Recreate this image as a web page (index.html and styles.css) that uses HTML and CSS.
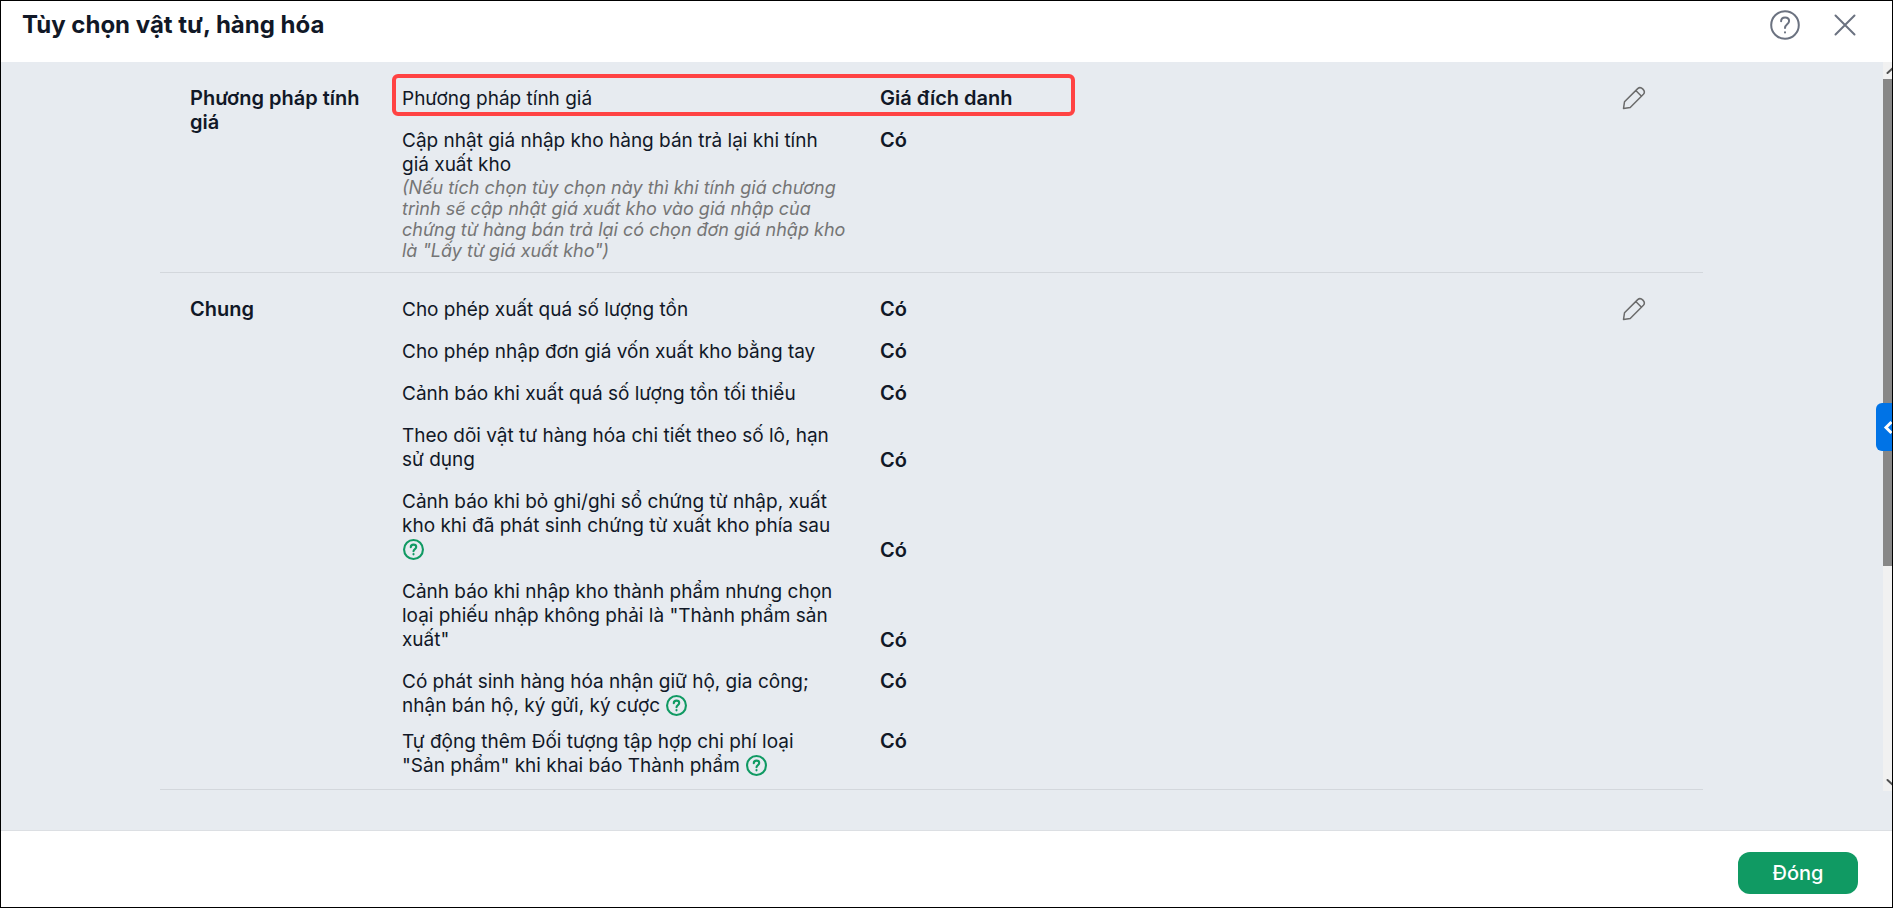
FILE: index.html
```
<!DOCTYPE html>
<html lang="vi">
<head>
    <meta charset="UTF-8">
    <meta name="viewport" content="width=device-width, initial-scale=1.0">
    <title>Tùy chọn vật tư, hàng hóa</title>
    <link rel="stylesheet" href="styles.css">
</head>
<body>
    <svg class="icon-defs" aria-hidden="true">
        <symbol id="icon-pencil" viewBox="0 0 24 24">
            <path d="M1.5 22.5 2.5 15.8 15.7 2.6Q18.2 .4 20.9 3.1 23.6 5.8 21.4 8.3L8.2 21.5Z M13.8 4.5 19.5 10.2"/>
        </symbol>
        <symbol id="icon-help" viewBox="0 0 20 20">
            <circle cx="10" cy="10" r="9"/>
            <path d="M7.4 7.9C7.4 6.3 8.5 5.4 10 5.4s2.6.9 2.6 2.3c0 1.9-2.6 1.9-2.6 4"/>
            <path d="M10 14.3v.3"/>
        </symbol>
    </svg>

    <div class="dialog">
        <header class="dialog-header">
            <h1>Tùy chọn vật tư, hàng hóa</h1>
            <div class="header-actions">
                <button class="icon-btn" type="button" aria-label="Trợ giúp">
                    <svg class="icon-help-lg" viewBox="0 0 30 30">
                        <circle cx="15" cy="15" r="13.8"/>
                        <path d="M11.1 11.2C11.1 8.8 12.7 7.4 15.1 7.4s4 1.4 4 3.6c0 3.1-4.1 3.4-4.1 6.9"/>
                        <path d="M15 22.3v.3"/>
                    </svg>
                </button>
                <button class="icon-btn" type="button" aria-label="Đóng cửa sổ">
                    <svg class="icon-close" viewBox="0 0 30 30">
                        <path d="M5.5 5.5 24.5 24.5M24.5 5.5 5.5 24.5"/>
                    </svg>
                </button>
            </div>
        </header>

        <main class="dialog-body">
            <div class="options">
                <section class="option-group">
                    <h2>Phương pháp tính giá</h2>
                    <dl>
                        <div class="option-row highlight">
                            <dt>Phương pháp tính giá</dt>
                            <dd>Giá đích danh</dd>
                        </div>
                        <div class="option-row">
                            <dt>
                                Cập nhật giá nhập kho hàng bán trả lại khi tính giá xuất kho
                                <p class="note">(Nếu tích chọn tùy chọn này thì khi tính giá chương trình sẽ cập nhật giá xuất kho vào giá nhập của chứng từ hàng bán trả lại có chọn đơn giá nhập kho là "Lấy từ giá xuất kho")</p>
                            </dt>
                            <dd>Có</dd>
                        </div>
                    </dl>
                    <button class="edit-btn" type="button" aria-label="Sửa"><svg><use href="#icon-pencil"/></svg></button>
                </section>

                <section class="option-group">
                    <h2>Chung</h2>
                    <dl>
                        <div class="option-row">
                            <dt>Cho phép xuất quá số lượng tồn</dt>
                            <dd>Có</dd>
                        </div>
                        <div class="option-row">
                            <dt>Cho phép nhập đơn giá vốn xuất kho bằng tay</dt>
                            <dd>Có</dd>
                        </div>
                        <div class="option-row">
                            <dt>Cảnh báo khi xuất quá số lượng tồn tối thiểu</dt>
                            <dd>Có</dd>
                        </div>
                        <div class="option-row bottom">
                            <dt>Theo dõi vật tư hàng hóa chi tiết theo số lô, hạn sử dụng</dt>
                            <dd>Có</dd>
                        </div>
                        <div class="option-row bottom">
                            <dt>
                                Cảnh báo khi bỏ ghi/ghi sổ chứng từ nhập, xuất kho khi đã phát sinh chứng từ xuất kho phía sau
                                <button class="help-btn" type="button" aria-label="Giải thích"><svg><use href="#icon-help"/></svg></button>
                            </dt>
                            <dd>Có</dd>
                        </div>
                        <div class="option-row bottom">
                            <dt>Cảnh báo khi nhập kho thành phẩm nhưng chọn loại phiếu nhập không phải là "Thành phẩm sản xuất"</dt>
                            <dd>Có</dd>
                        </div>
                        <div class="option-row compact">
                            <dt>
                                Có phát sinh hàng hóa nhận giữ hộ, gia công; nhận bán hộ, ký gửi, ký cược
                                <button class="help-btn" type="button" aria-label="Giải thích"><svg><use href="#icon-help"/></svg></button>
                            </dt>
                            <dd>Có</dd>
                        </div>
                        <div class="option-row">
                            <dt>
                                Tự động thêm Đối tượng tập hợp chi phí loại "Sản phẩm" khi khai báo Thành phẩm
                                <button class="help-btn" type="button" aria-label="Giải thích"><svg><use href="#icon-help"/></svg></button>
                            </dt>
                            <dd>Có</dd>
                        </div>
                    </dl>
                    <button class="edit-btn" type="button" aria-label="Sửa"><svg><use href="#icon-pencil"/></svg></button>
                </section>
            </div>

            <div class="scrollbar" aria-hidden="true">
                <svg class="scroll-arrow" viewBox="0 0 9 17"><path d="M4.5 11 11 5"/></svg>
                <div class="scroll-track"><div class="scroll-thumb"></div></div>
                <svg class="scroll-arrow" viewBox="0 0 9 17"><path d="M4.5 6 11 12"/></svg>
            </div>

            <button class="side-tab" type="button" aria-label="Mở rộng">
                <svg viewBox="0 0 16 48"><path d="M15.5 19 10 24.5 15.5 30"/></svg>
            </button>
        </main>

        <footer class="dialog-footer">
            <button class="close-btn" type="button">Đóng</button>
        </footer>
    </div>
</body>
</html>
```
FILE: styles.css
```
*, *::before {
    box-sizing: border-box;
}

body {
    margin: 0;
    font-family: Inter, "Noto Sans", sans-serif;
    font-size: 20px;
    line-height: 24px;
    color: #111827;
}

h1, h2, p, dl, dd {
    margin: 0;
}

button {
    padding: 0;
    border: none;
    background: none;
    font-family: inherit;
    cursor: pointer;
}

svg {
    display: block;
    fill: none;
    stroke-linecap: round;
    stroke-linejoin: round;
}

.icon-defs {
    position: absolute;
    width: 0;
    height: 0;
}

.dialog {
    display: flex;
    flex-direction: column;
    min-height: 100vh;
    border: 1px solid #000;
    background-color: #fff;
}

/* Header */
.dialog-header {
    display: flex;
    justify-content: space-between;
    align-items: center;
    padding: 9px 32px 22px 21px;
}

h1 {
    font-size: 24px;
    line-height: 30px;
    font-weight: 700;
}

.header-actions {
    display: flex;
    gap: 30px;
}

.icon-btn svg {
    width: 30px;
    height: 30px;
    stroke: #6b7280;
    stroke-width: 2;
}

/* Body */
.dialog-body {
    position: relative;
    display: flex;
    flex: 1;
    padding-bottom: 39px;
    border-bottom: 1px solid #dcdfe3;
    background-color: #e7ebf0;
}

.options {
    flex: 1;
    padding: 0 180px 0 159px;
}

.option-group {
    display: grid;
    grid-template-columns: 182px 1fr 24px;
    column-gap: 30px;
    align-items: start;
    padding: 24px 57px 11px 30px;
    border-bottom: 1px solid #d3d7dc;
}

h2 {
    font-size: 20px;
    line-height: 24px;
    font-weight: 600;
}

.option-row {
    position: relative;
    display: grid;
    grid-template-columns: 448px 1fr;
    column-gap: 30px;
    margin-bottom: 17px;
}

.option-row.compact {
    margin-bottom: 11px;
}

.option-row:last-child {
    margin-bottom: 0;
}

.option-row.bottom {
    align-items: end;
}

dt {
    padding: 1px 12px 0 0;
    font-size: 19px;
}

dd {
    font-weight: 600;
}

.highlight::before {
    content: "";
    position: absolute;
    top: -12px;
    bottom: -5px;
    left: -10px;
    width: 683px;
    border: 4px solid #ff4343;
    border-radius: 6px;
}

.note {
    margin-right: -12px;
    font-size: 18px;
    line-height: 21px;
    font-style: italic;
    color: #757575;
}

.edit-btn svg {
    width: 24px;
    height: 24px;
    stroke: #6b6b6b;
    stroke-width: 1.5;
}

.help-btn {
    vertical-align: top;
    margin: 1px 0 0 1px;
}

.help-btn svg {
    width: 21px;
    height: 21px;
    stroke: #109a63;
    stroke-width: 2;
}

/* Scrollbar */
.scrollbar {
    display: flex;
    flex-direction: column;
    width: 9px;
    background-color: #f1f1f1;
}

.scroll-arrow {
    width: 9px;
    height: 17px;
    stroke: #505050;
    stroke-width: 2;
}

.scroll-track {
    flex: 1;
}

.scroll-thumb {
    height: 70%;
    background-color: #878787;
}

.side-tab {
    position: absolute;
    top: 341px;
    right: 0;
    width: 16px;
    height: 48px;
    border-radius: 6px 0 0 6px;
    background-color: #0073e6;
}

.side-tab svg {
    width: 16px;
    height: 48px;
    stroke: #fff;
    stroke-width: 3;
    stroke-linecap: butt;
    stroke-linejoin: miter;
}

/* Footer */
.dialog-footer {
    display: flex;
    justify-content: flex-end;
    padding: 21px 34px 13px;
}

.close-btn {
    width: 120px;
    height: 42px;
    border-radius: 12px;
    background-color: #109a63;
    color: #fff;
    font-size: 20px;
    font-weight: 500;
}
```
